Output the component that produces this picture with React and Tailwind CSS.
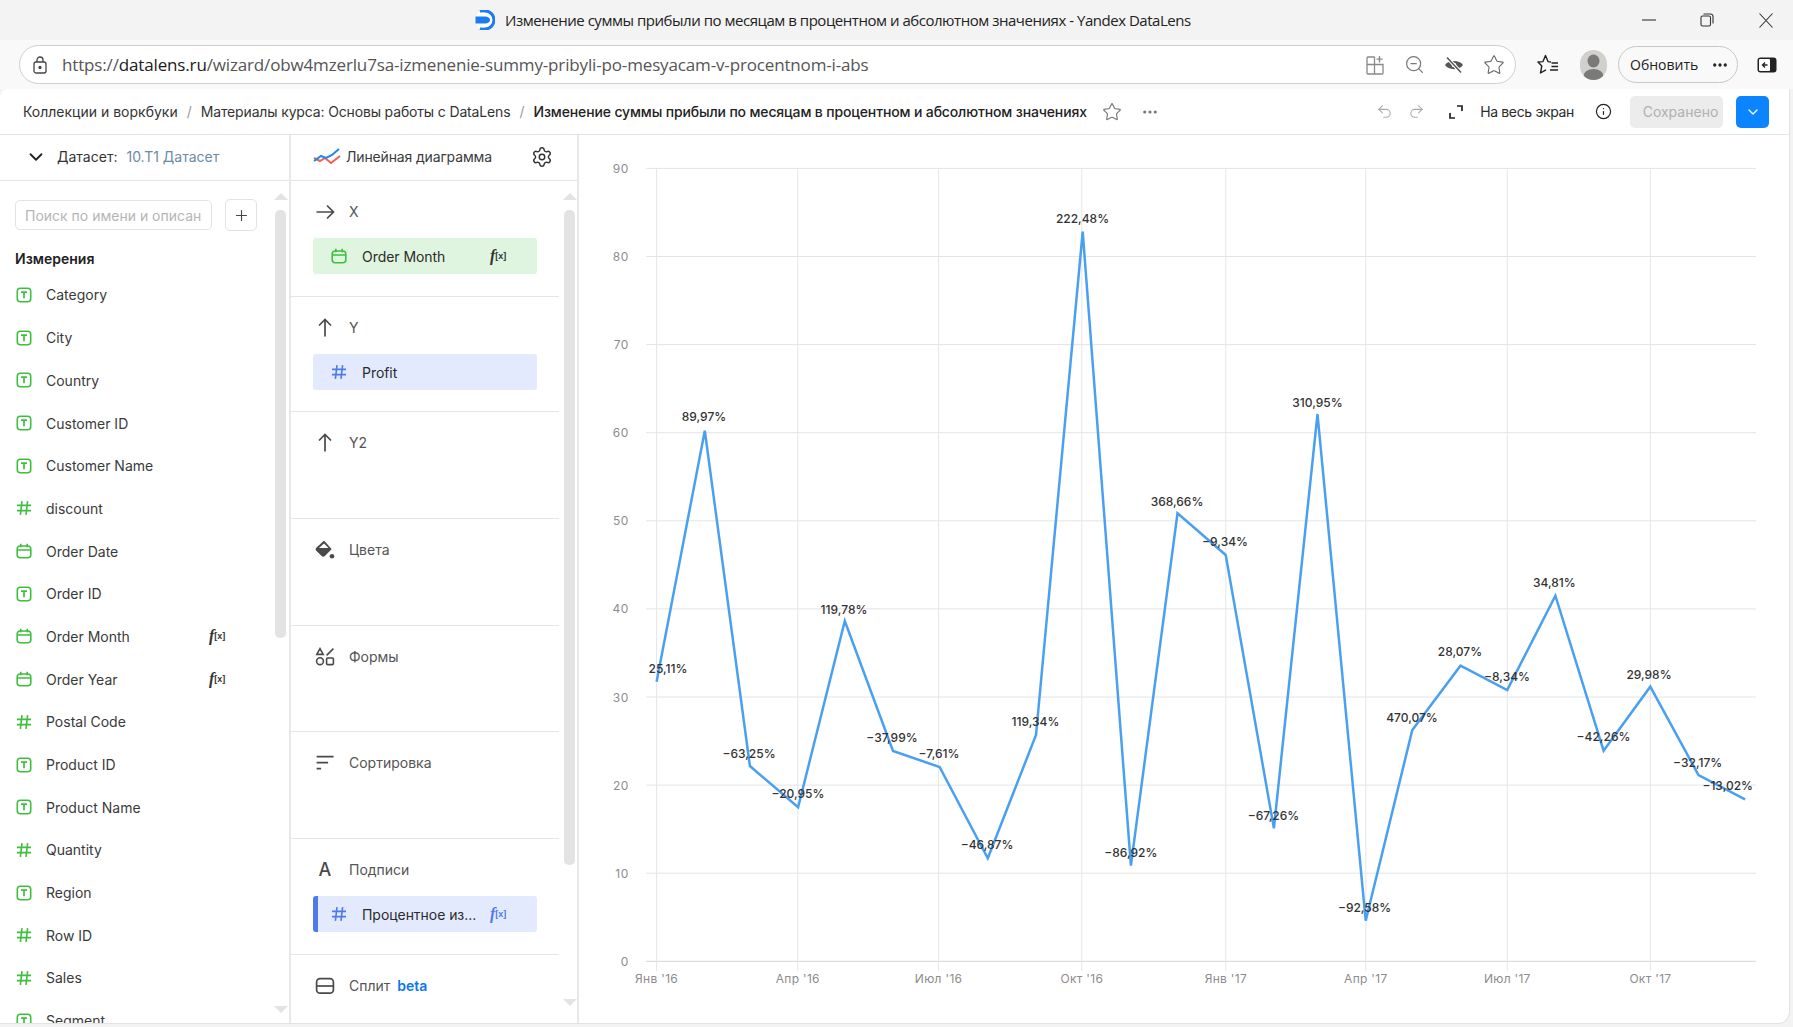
// App.jsx
import React from 'react';
import { Star, ZoomOut, Undo2, Redo2, Info, ChevronDown, Settings, Plus, MoreHorizontal } from 'lucide-react';

const GREEN = '#3fbf3f';

const fields = [
    ['t', 'Category'], ['t', 'City'], ['t', 'Country'], ['t', 'Customer ID'], ['t', 'Customer Name'],
    ['n', 'discount'], ['d', 'Order Date'], ['t', 'Order ID'], ['d', 'Order Month', true], ['d', 'Order Year', true],
    ['n', 'Postal Code'], ['t', 'Product ID'], ['t', 'Product Name'], ['n', 'Quantity'], ['t', 'Region'],
    ['n', 'Row ID'], ['n', 'Sales'], ['t', 'Segment'],
];

// chart points: x, y of the line, label, label x, label y
const points = [
    [656.6, 681.7, '25,11%', 668, 669], [704.8, 430.7, '89,97%', 704, 416.7], [749.9, 766, '−63,25%', 749, 753.7],
    [798.1, 807.3, '−20,95%', 798, 793.7], [844.8, 621, '119,78%', 844, 610], [893, 751, '−37,99%', 892, 737.7],
    [939.6, 767, '−7,61%', 939, 753.7], [987.8, 858.3, '−46,87%', 987, 844.7], [1036, 735, '119,34%', 1035.5, 721.7],
    [1082.7, 231.7, '222,48%', 1082.5, 218.7], [1130.9, 865.7, '−86,92%', 1130.8, 852.7], [1177.5, 513.3, '368,66%', 1177, 501.7],
    [1225.7, 555, '−9,34%', 1225, 542], [1273.9, 828.3, '−67,26%', 1273.5, 815.7], [1317.5, 414, '310,95%', 1317.5, 402.6],
    [1365.7, 920.7, '−92,58%', 1364.6, 907.7], [1412.3, 730, '470,07%', 1412, 717.7], [1460.5, 665.7, '28,07%', 1460, 651.7],
    [1507.2, 690, '−8,34%', 1507, 676.7], [1555.4, 595.7, '34,81%', 1554.3, 583.3], [1603.6, 750.7, '−42,26%', 1603.5, 737.3],
    [1650.3, 686.7, '29,98%', 1649, 675], [1698.5, 775, '−32,17%', 1697.7, 762.7], [1745.1, 799.3, '−13,02%', 1727.7, 785.7],
];
const xTicks = [[656.6, "Янв '16"], [797.8, "Апр '16"], [938.6, "Июл '16"], [1081.8, "Окт '16"], [1225.8, "Янв '17"], [1365.8, "Апр '17"], [1507.3, "Июл '17"], [1650.4, "Окт '17"]];
const yTicks = [90, 80, 70, 60, 50, 40, 30, 20, 10, 0];

const TextIcon = ({ color = GREEN }) => (
    <svg width="16" height="16" viewBox="0 0 16 16" fill="none" stroke={color} strokeWidth="1.6">
        <rect x="1.3" y="1.3" width="13.4" height="13.4" rx="3" />
        <path d="M5 5.2h6M8 5.2v6" strokeWidth="1.7" />
    </svg>
);
const HashIcon = ({ color = GREEN }) => (
    <svg width="16" height="16" viewBox="0 0 16 16" fill="none" stroke={color} strokeWidth="1.6">
        <path d="M1 5.4h14M1 10.6h14M6 1.2 4.4 14.8M11.6 1.2 10 14.8" />
    </svg>
);
const DateIcon = ({ color = GREEN }) => (
    <svg width="16" height="16" viewBox="0 0 16 16" fill="none" stroke={color} strokeWidth="1.6">
        <rect x="1.2" y="3" width="13.6" height="11.8" rx="3" />
        <path d="M1.2 7h13.6M4.8 .8v3.4M11.2 .8v3.4" />
    </svg>
);
const FieldIcon = ({ type, color }) => {
    if (type === 't') return <TextIcon color={color} />;
    if (type === 'n') return <HashIcon color={color} />;
    return <DateIcon color={color} />;
};
const Fx = ({ color = '#333' }) => (
    <span className="flex items-center font-['Liberation_Serif',serif] leading-none" style={{ color }}>
        <span className="text-[16px] italic font-bold">f</span>
        <span className="text-[9px] font-bold font-['Liberation_Sans',sans-serif]">[x]</span>
    </span>
);

const LineChartIcon = () => (
    <svg width="28" height="18" viewBox="0 0 28 18" fill="none" strokeWidth="2">
        <path d="M1 10l6 3 5-3 6 5 9-7" stroke="#f2604f" />
        <path d="M1 13l7-5 5 2 6-3 7-6" stroke="#1e88ef" />
    </svg>
);
const ArrowRightIcon = () => (
    <svg width="20" height="20" viewBox="0 0 20 20" fill="none" stroke="#4a4a4a" strokeWidth="1.7">
        <path d="M1.500 10h17M12 3.500 18.500 10 12 16.500" />
    </svg>
);
const ArrowUpIcon = () => (
    <svg width="20" height="20" viewBox="0 0 20 20" fill="none" stroke="#4a4a4a" strokeWidth="1.7">
        <path d="M10 1.500v17M4 7.500 10 1.500l6 6" />
    </svg>
);
const BucketIcon = () => (
    <svg width="20" height="20" viewBox="0 0 20 20">
        <path d="M9 1.500 1.700 8.200a1.500 1.500 0 0 0 0 2.200l5.200 5a2 2 0 0 0 2.800 0l6.200-6.300z" fill="#4a4a4a" stroke="#4a4a4a" strokeWidth="1.200" strokeLinejoin="round" />
        <path d="M9 3.400 13.500 8H4z" fill="#fff" />
        <circle cx="17" cy="16.300" r="2.300" fill="#4a4a4a" />
    </svg>
);
const ShapesIcon = () => (
    <svg width="20" height="20" viewBox="0 0 20 20" fill="none" stroke="#4a4a4a" strokeWidth="1.6">
        <path d="M5 1.600 8.200 7.400H1.800z" />
        <circle cx="5" cy="14.200" r="3.400" />
        <rect x="11.600" y="11" width="6.800" height="6.600" rx="1" />
        <path d="M11.600 8.400 18.400 1.600" />
    </svg>
);
const SortIcon = () => (
    <svg width="20" height="20" viewBox="0 0 20 20" fill="none" stroke="#4a4a4a" strokeWidth="1.700">
        <path d="M1.600 3.600h17M1.600 9.600h11.500M1.600 15.600h4.500" />
    </svg>
);
const LetterIcon = () => <span className="text-[18px] leading-none font-medium text-[#4a4a4a]">A</span>;
const SplitIcon = () => (
    <svg width="20" height="20" viewBox="0 0 20 20" fill="none" stroke="#4a4a4a" strokeWidth="1.700">
        <rect x="1.600" y="2.600" width="16.800" height="14.600" rx="3.400" />
        <path d="M1.600 10h16.800" />
    </svg>
);

const ScrollCol = ({ thumb, bottom }) => (
    <div className="flex flex-col items-center w-[13px] pt-[12px]">
        <div className="w-0 h-0 border-x-[7px] border-x-transparent border-b-[7px] border-b-[#e3e3e3]" />
        <div className={`w-[11px] mt-[10px] rounded-[5px] bg-[#e3e3e3] ${thumb}`} />
        <div className={`mt-auto w-0 h-0 border-x-[7px] border-x-transparent border-t-[7px] border-t-[#e3e3e3] ${bottom}`} />
    </div>
);

const Pill = ({ bg, type, color, label, fx, fxColor, bar }) => (
    <div className={`flex items-center w-[224px] h-[36px] rounded-[3px] ${bg} ${bar ? 'border-l-[5px] border-l-[#4d79ed] pl-[13px]' : 'pl-[18px]'}`}>
        <FieldIcon type={type} color={color} />
        <span className="ml-[15px] w-[118px] whitespace-nowrap text-[14px] tracking-[-0.05px] text-[#2b2b2b]">{label}</span>
        {fx && <span className="ml-[10px]"><Fx color={fxColor} /></span>}
    </div>
);

const sections = [
    { h: 'h-[116px]', icon: <ArrowRightIcon />, title: 'X', pill: <Pill bg="bg-[#e0f5e0]" type="d" color={GREEN} label="Order Month" fx /> },
    { h: 'h-[115px]', icon: <ArrowUpIcon />, title: 'Y', pill: <Pill bg="bg-[#e4eafd]" type="n" color="#4d79ed" label="Profit" /> },
    { h: 'h-[107px]', icon: <ArrowUpIcon />, title: 'Y2' },
    { h: 'h-[107px]', icon: <BucketIcon />, title: 'Цвета' },
    { h: 'h-[106px]', icon: <ShapesIcon />, title: 'Формы' },
    { h: 'h-[107px]', icon: <SortIcon />, title: 'Сортировка' },
    { h: 'h-[116px]', icon: <LetterIcon />, title: 'Подписи', pill: <Pill bg="bg-[#e4eafd]" type="n" color="#4d79ed" label="Процентное из..." fx fxColor="#4d79ed" bar /> },
    { h: 'h-[60px]', icon: <SplitIcon />, title: 'Сплит', beta: true, last: true },
];

const Chart = () => (
    <svg className="block w-[1211px] h-[889px]" viewBox="579 135 1211 889">
        {yTicks.map((v) => {
            const y = 961.3 - 8.81 * v;
            return (
                <g key={v}>
                    <line x1="646" x2="1756" y1={y} y2={y} stroke={v === 0 ? '#d5d5d5' : '#e4e4e4'} strokeWidth="1" />
                    <text x="629" y={y + 4.5} textAnchor="end" fontSize="12" letterSpacing="0.6" fill="#8c8c8c" fontFamily="Inter, sans-serif">{v}</text>
                </g>
            );
        })}
        {xTicks.map(([x, t]) => (
            <g key={t}>
                <line x1={x} x2={x} y1="168" y2="971" stroke="#e6e6e6" strokeWidth="1" />
                <text x={x} y="983" textAnchor="middle" fontSize="12" letterSpacing="0.3" fill="#8c8c8c" fontFamily="Inter, sans-serif">{t}</text>
            </g>
        ))}
        <polyline fill="none" stroke="#4aa0f0" strokeWidth="2.5" points={points.map((p) => `${p[0]},${p[1]}`).join(' ')} />
        {points.map((p) => (
            <text key={p[2]} x={p[3]} y={p[4] + 4} textAnchor="middle" fontSize="12" fontWeight="500" fill="#333" fontFamily="Inter, sans-serif">{p[2]}</text>
        ))}
    </svg>
);

const App = () => {
    return (
        <div className="w-[1793px] h-[1027px] overflow-hidden bg-[#f3f3f3] font-['Inter',sans-serif]">
            {/* Window title bar */}
            <div className="flex items-center h-[40px]">
                <div className="flex items-center ml-[475px] w-[730px]">
                    <svg width="20" height="20" viewBox="0 0 20 20" fill="none">
                        <circle cx="10" cy="10" r="10" fill="#fff" />
                        <path d="M5 1.400a9 9 0 0 1 5-.4 9 9 0 0 1 0 18 9 9 0 0 1-5-.4" stroke="#1a7bf2" strokeWidth="3" />
                        <path d="M0.500 6.500h9.500c3 0 5 1.500 5 3.500s-2 3.500-5 3.500H0.500z" fill="#1a7bf2" />
                    </svg>
                    <span className="ml-[10px] text-[15px] text-[#222] font-['Open_Sans',sans-serif] tracking-[-0.47px] whitespace-nowrap">Изменение суммы прибыли по месяцам в процентном и абсолютном значениях - Yandex DataLens</span>
                </div>
                <div className="flex items-center ml-auto mr-[20px]">
                    <svg width="14" height="14" viewBox="0 0 14 14" fill="none" stroke="#333" strokeWidth="1.100">
                        <path d="M0 7h14" />
                    </svg>
                    <svg className="ml-[44px]" width="14" height="14" viewBox="0 0 14 14" fill="none" stroke="#333" strokeWidth="1.100">
                        <rect x="1" y="3" width="9.500" height="10" rx="1.500" />
                        <path d="M3.500 1h7A2.500 2.500 0 0 1 13 3.500v7" />
                    </svg>
                    <svg className="ml-[45px]" width="14" height="15" viewBox="0 0 14 15" fill="none" stroke="#333" strokeWidth="1.100">
                        <path d="M.5.5l13 14M13.500.5l-13 14" />
                    </svg>
                </div>
            </div>

            {/* Address bar */}
            <div className="flex items-center h-[49px] bg-[#f9f9f9] pl-[19px]">
                <div className="flex items-center w-[1497px] h-[39px] rounded-[20px] border border-[#cfcfcf] bg-white pl-[13px]">
                    <svg width="14" height="18" viewBox="0 0 14 18" fill="none" stroke="#444" strokeWidth="1.300">
                        <rect x="1" y="6" width="12" height="11" rx="2" />
                        <path d="M4 6V4a3 3 0 0 1 6 0v2" />
                        <circle cx="7" cy="11.500" r="1" fill="#444" />
                    </svg>
                    <span className="ml-[15px] text-[17px] text-[#555] font-['Open_Sans',sans-serif] tracking-[-0.15px] whitespace-nowrap">https://<span className="text-[#1a1a1a]">datalens.ru</span>/wizard/obw4mzerlu7sa-izmenenie-summy-pribyli-po-mesyacam-v-procentnom-i-abs</span>
                    <div className="flex items-center gap-[19px] ml-auto mr-[10px]">
                        <svg width="20" height="20" viewBox="0 0 20 20" fill="none" stroke="#888" strokeWidth="1.300">
                            <path d="M9.500 2H3a1 1 0 0 0-1 1v15a1 1 0 0 0 1 1h14a1 1 0 0 0 1-1V9.500H2M9.500 2v17M14.500 1v6.500M11.500 4.200h6" />
                        </svg>
                        <ZoomOut size={21} color="#777" strokeWidth={1.4} />
                        <svg width="20" height="20" viewBox="0 0 20 20">
                            <path d="M1 10C4 4.500 16 4.500 19 10 16 15.500 4 15.500 1 10z" fill="#555" />
                            <circle cx="10" cy="10" r="2.300" fill="#fff" />
                            <path d="M3 2.500 17 17.500" stroke="#fff" strokeWidth="3.500" />
                            <path d="M3 2.500 17 17.500" stroke="#555" strokeWidth="1.500" />
                        </svg>
                        <Star size={22} color="#666" strokeWidth={1.2} />
                    </div>
                </div>
                <svg className="ml-[21px]" width="22" height="22" viewBox="0 0 22 22" fill="none" stroke="#222" strokeWidth="1.400" strokeLinejoin="round">
                    <path d="M14 8 11 7.600 8.500 1.500 6 7.600 1 8l3.800 4L3.500 19l5.500-3.200" />
                    <path d="M14.500 9h6.500M14.500 12.500h6.500M13 16h8" />
                </svg>
                <div className="ml-[21px] flex items-center justify-center w-[27px] h-[30px] rounded-full bg-[#d2d0cc] overflow-hidden">
                    <svg width="27" height="30" viewBox="0 0 27 30" fill="#7a7a78">
                        <ellipse cx="13.500" cy="11" rx="6" ry="6.500" />
                        <ellipse cx="13.500" cy="26" rx="10" ry="7" />
                    </svg>
                </div>
                <div className="flex items-center w-[120px] h-[37px] ml-[11px] rounded-[19px] border border-[#c8c8c8] bg-[#f9f9f9] pl-[11px]">
                    <span className="text-[14px] text-[#222] font-['Open_Sans',sans-serif]">Обновить</span>
                    <MoreHorizontal className="ml-[13px]" size={18} color="#222" strokeWidth={2.4} />
                </div>
                <svg className="ml-[19px]" width="20" height="16" viewBox="0 0 20 16">
                    <rect x="0.500" y="0.500" width="19" height="15" rx="3" fill="#222" />
                    <rect x="2" y="2" width="11" height="12" rx="1" fill="#fff" />
                    <path d="M10.500 8H5.500M8 5.500 5.500 8 8 10.500" stroke="#222" strokeWidth="1.300" fill="none" />
                </svg>
            </div>

            {/* Page */}
            <div className="w-[1790px] h-[935px] bg-white rounded-tl-[8px] rounded-br-[12px] border-b border-r border-[#e2e2e2] flex flex-col">
                <div className="flex items-center h-[46px] shrink-0 border-b border-[#e5e5e5] pl-[23px] text-[14px]">
                    <span className="text-[#333] whitespace-nowrap">Коллекции и воркбуки</span>
                    <span className="mx-[9px] text-[#999]">/</span>
                    <span className="text-[#333] whitespace-nowrap tracking-[-0.15px]">Материалы курса: Основы работы с DataLens</span>
                    <span className="mx-[9px] text-[#999]">/</span>
                    <span className="font-medium text-[#222] whitespace-nowrap tracking-[-0.14px]">Изменение суммы прибыли по месяцам в процентном и абсолютном значениях</span>
                    <Star className="ml-[15px]" size={20} color="#777" strokeWidth={1.4} />
                    <MoreHorizontal className="ml-[19px]" size={18} color="#777" strokeWidth={2.2} />
                    <div className="flex items-center ml-auto mr-[20px]">
                        <Undo2 size={17} color="#aaa" strokeWidth={1.5} />
                        <Redo2 className="ml-[15px]" size={17} color="#aaa" strokeWidth={1.5} />
                        <svg className="ml-[24px]" width="14" height="14" viewBox="0 0 14 14" fill="none" stroke="#222" strokeWidth="1.700">
                            <path d="M8 1h5v5M1 8v5h5" />
                        </svg>
                        <span className="ml-[17px] text-[#2b2b2b] whitespace-nowrap tracking-[-0.35px]">На весь экран</span>
                        <Info className="ml-[21px]" size={17} color="#222" strokeWidth={1.700} />
                        <div className="flex items-center justify-center ml-[18px] w-[93px] h-[32px] rounded-[5px] bg-[#ececec] text-[#b0b0b0] pl-[8px]">Сохранено</div>
                        <div className="flex items-center justify-center ml-[13px] w-[33px] h-[32px] rounded-[5px] bg-[#0a84ff]">
                            <ChevronDown size={16} color="#fff" strokeWidth={2} />
                        </div>
                    </div>
                </div>

                <div className="flex flex-1 min-h-0">
                    {/* Dataset panel */}
                    <div className="flex flex-col w-[291px] shrink-0 border-r-2 border-[#e8e8e8]">
                        <div className="flex items-center h-[46px] shrink-0 border-b border-[#e5e5e5] pl-[25px] pb-[2px] text-[14px]">
                            <ChevronDown size={22} color="#222" strokeWidth={2} />
                            <span className="ml-[10px] text-[#333]">Датасет:</span>
                            <span className="ml-[9px] text-[#6b8ba6]">10.T1 Датасет</span>
                        </div>
                        <div className="flex flex-1 min-h-0 overflow-hidden">
                            <div className="w-[274px] shrink-0">
                                <div className="flex items-center pt-[18px] pl-[15px]">
                                    <input
                                        readOnly
                                        placeholder="Поиск по имени и описанию"
                                        className="w-[197px] h-[30px] rounded-[5px] border border-[#e3e3e3] pl-[9px] pr-[9px] text-[14px] outline-none placeholder:text-[#b5b5b5]"
                                    />
                                    <div className="flex items-center justify-center ml-[13px] w-[32px] h-[32px] rounded-[5px] border border-[#e3e3e3]">
                                        <Plus size={17} color="#444" strokeWidth={1.6} />
                                    </div>
                                </div>
                                <div className="mt-[18px] pl-[15px] h-[20px] leading-[20px] text-[14px] font-semibold text-[#222]">Измерения</div>
                                <div className="mt-[4.6px]">
                                    {fields.map(([type, name, fx]) => (
                                        <div key={name} className="flex items-center h-[42.7px] pl-[16px]">
                                            <FieldIcon type={type} />
                                            <span className="ml-[14px] w-[163px] text-[14px] text-[#3a3a3a]">{name}</span>
                                            {fx && <Fx />}
                                        </div>
                                    ))}
                                </div>
                            </div>
                            <ScrollCol thumb="h-[428px]" bottom="mb-[10px]" />
                        </div>
                    </div>

                    {/* Sections panel */}
                    <div className="flex flex-col w-[288px] shrink-0 border-r-2 border-[#e8e8e8]">
                        <div className="flex items-center h-[46px] shrink-0 border-b border-[#e5e5e5] pl-[22px] pb-[2px] text-[14px]">
                            <LineChartIcon />
                            <span className="ml-[5px] text-[#3a3a3a] tracking-[-0.15px]">Линейная диаграмма</span>
                            <Settings className="ml-[39px]" size={22} color="#333" strokeWidth={1.6} />
                        </div>
                        <div className="flex flex-1 min-h-0 overflow-hidden">
                            <div className="w-[268px] shrink-0">
                                {sections.map((s) => (
                                    <div key={s.title} className={`${s.h} ${s.last ? '' : 'border-b border-[#e5e5e5]'} pt-[18.5px]`}>
                                        <div className="flex items-center h-[24px] text-[14px] text-[#555]">
                                            <span className="flex items-center justify-center w-[20px] ml-[24px]">{s.icon}</span>
                                            <span className="ml-[14px]">{s.title}</span>
                                            {s.beta && <span className="ml-[7px] font-semibold text-[#0a78f0]">beta</span>}
                                        </div>
                                        {s.pill && <div className="mt-[14.5px] ml-[22px]">{s.pill}</div>}
                                    </div>
                                ))}
                            </div>
                            <div className="flex ml-[4px]"><ScrollCol thumb="h-[655px]" bottom="mb-[17px]" /></div>
                        </div>
                    </div>

                    {/* Chart */}
                    <div className="flex-1 min-w-0">
                        <Chart />
                    </div>
                </div>
            </div>
        </div>
    );
};

export default App;
